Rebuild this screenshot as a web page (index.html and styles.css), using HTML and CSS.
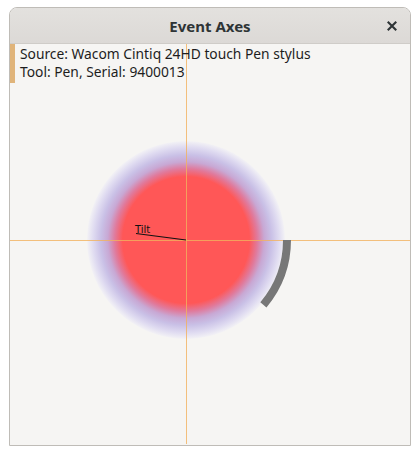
FILE: index.html
```html
<!DOCTYPE html>
<html>
<head>
<meta charset="utf-8">
<link rel="stylesheet" href="styles.css">
</head>
<body>
<div class="window">
  <div class="titlebar">
    <span class="title">Event Axes</span>
    <svg class="close" width="10" height="10" viewBox="0 0 10 10">
      <path d="M1.5 1.5 L8.5 8.5 M8.5 1.5 L1.5 8.5" stroke="#2e3436" stroke-width="2.1" stroke-linecap="square"/>
    </svg>
  </div>
  <div class="content">
    <svg class="canvas" width="400" height="400" viewBox="0 0 400 400">
      <defs>
        <radialGradient id="pg" cx="176" cy="196" r="99" gradientUnits="userSpaceOnUse">
          <stop offset="0" stop-color="#ff5757"/>
          <stop offset="0.64" stop-color="#ff5757"/>
          <stop offset="0.72" stop-color="#e07a9c"/>
          <stop offset="0.79" stop-color="#c8a8d4"/>
          <stop offset="0.86" stop-color="#c9c0e6"/>
          <stop offset="0.94" stop-color="#e0dcf1"/>
          <stop offset="1" stop-color="#f3f2f5"/>
        </radialGradient>
      </defs>
      <circle cx="176" cy="196" r="99" fill="url(#pg)"/>
      <line x1="176.5" y1="0" x2="176.5" y2="400" stroke="#f2b25e" stroke-opacity="0.8" stroke-width="1"/>
      <line x1="0" y1="196.5" x2="400" y2="196.5" stroke="#f2b25e" stroke-opacity="0.8" stroke-width="1"/>
      <path d="M 277 196 A 101 101 0 0 1 253.4 260.9" fill="none" stroke="#777777" stroke-width="8"/>
      <line x1="176" y1="196" x2="126" y2="189.5" stroke="#111" stroke-width="1.2"/>
      <text x="125" y="189" class="tilt">Tilt</text>
    </svg>
    <div class="info">
      <div class="line">Source: Wacom Cintiq 24HD touch Pen stylus</div>
      <div class="line">Tool: Pen, Serial: 9400013</div>
    </div>
  </div>
</div>
</body>
</html>
```
FILE: styles.css
```css
html, body {
  margin: 0;
  padding: 0;
  background: #ffffff;
}
body {
  padding: 7px 9px 0 9px;
  font-family: "Noto Sans", "DejaVu Sans", sans-serif;
  color: #2e3436;
}
.window {
  width: 400px;
  height: 437px;
  border: 1px solid #bfbcb7;
  border-radius: 8px 8px 0 0;
  display: flex;
  flex-direction: column;
  overflow: hidden;
  background: #f6f5f3;
}
.titlebar {
  height: 35px;
  flex: none;
  border-bottom: 1px solid #cfccc8;
  background: linear-gradient(#e3e1de, #dcd9d6);
  display: flex;
  align-items: center;
  justify-content: center;
  position: relative;
}
.title {
  font-weight: bold;
  font-size: 15px;
  color: #2e3436;
}
.close {
  position: absolute;
  left: 377px;
  top: 13px;
}
.content {
  flex: 1;
  position: relative;
  background: #f6f5f3;
}
.canvas {
  position: absolute;
  left: 0;
  top: 0;
}
.tilt {
  font-family: "DejaVu Sans", sans-serif;
  font-size: 10px;
  fill: #111;
}
.info {
  position: relative;
  border-left: 5px solid #e0b47a;
  padding: 1px 0 2px 5px;
  width: fit-content;
}
.line {
  font-size: 13.8px;
  line-height: 18px;
  color: #1d1d1d;
}
```
